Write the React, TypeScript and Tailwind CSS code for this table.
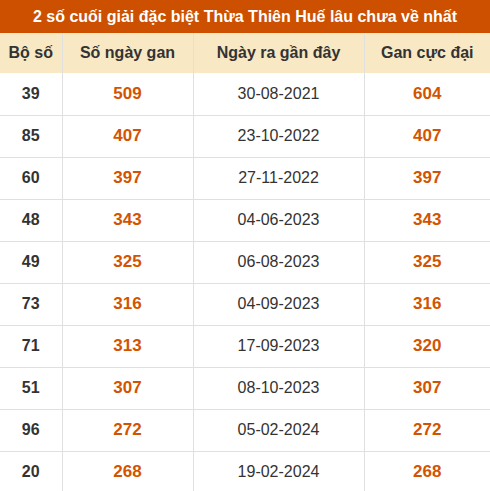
const rows: [string, string, string, string][] = [
  ['39', '509', '30-08-2021', '604'],
  ['85', '407', '23-10-2022', '407'],
  ['60', '397', '27-11-2022', '397'],
  ['48', '343', '04-06-2023', '343'],
  ['49', '325', '06-08-2023', '325'],
  ['73', '316', '04-09-2023', '316'],
  ['71', '313', '17-09-2023', '320'],
  ['51', '307', '08-10-2023', '307'],
  ['96', '272', '05-02-2024', '272'],
  ['20', '268', '19-02-2024', '268'],
];

export default function App() {
  return (
    <div className="w-[490px] bg-white font-['Liberation_Sans',Arial,sans-serif] text-[#333]">
      <div className="h-[33px] bg-[#cc5000] text-white font-bold text-[16px] flex items-center justify-center">
        2 số cuối giải đặc biệt Thừa Thiên Huế lâu chưa về nhất
      </div>
      <table className="w-full border-collapse">
        <colgroup>
          <col className="w-[62px]" />
          <col className="w-[131px]" />
          <col className="w-[171px]" />
          <col />
        </colgroup>
        <thead>
          <tr className="h-[40px] bg-[#f8e8c3] text-[16px] font-bold">
            <th className="border-r border-[#e0e0e0]">Bộ số</th>
            <th className="border-r border-[#e0e0e0]">Số ngày gan</th>
            <th className="border-r border-[#e0e0e0]">Ngày ra gần đây</th>
            <th>Gan cực đại</th>
          </tr>
        </thead>
        <tbody>
          {rows.map(([n, gan, date, max]) => (
            <tr key={n} className="h-[42px] border-b border-[#e0e0e0] text-center">
              <td className="border-r border-[#e0e0e0] font-bold text-[16px]">{n}</td>
              <td className="border-r border-[#e0e0e0] font-bold text-[17px] text-[#d35400]">{gan}</td>
              <td className="border-r border-[#e0e0e0] text-[16px]">{date}</td>
              <td className="font-bold text-[17px] text-[#d35400]">{max}</td>
            </tr>
          ))}
        </tbody>
      </table>
    </div>
  );
}
